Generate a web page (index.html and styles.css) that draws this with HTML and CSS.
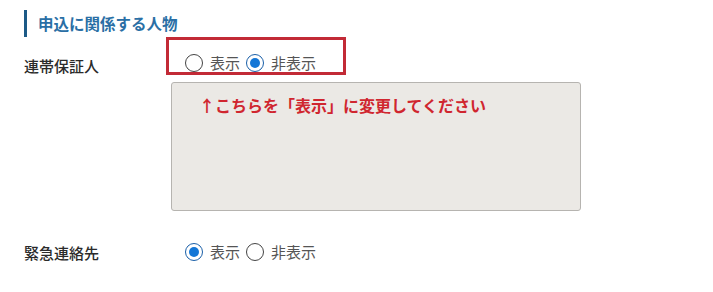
FILE: index.html
```html
<!DOCTYPE html>
<html lang="ja">
<head>
<meta charset="utf-8">
<link rel="stylesheet" href="styles.css">
</head>
<body>
<div class="page">
  <h2 class="section-title">申込に関係する人物</h2>
  <div class="row row-first">
    <div class="label">連帯保証人</div>
    <div class="highlight">
      <div class="options">
        <span class="option"><span class="radio"></span><span class="opt-text">表示</span></span>
        <span class="option"><span class="radio checked"></span><span class="opt-text">非表示</span></span>
      </div>
    </div>
  </div>
  <div class="note-box">
    <p class="note">↑こちらを「表示」に変更してください</p>
  </div>
  <div class="row row-second">
    <div class="label">緊急連絡先</div>
    <div class="options plain">
      <span class="option"><span class="radio checked"></span><span class="opt-text">表示</span></span>
      <span class="option"><span class="radio"></span><span class="opt-text">非表示</span></span>
    </div>
  </div>
</div>
</body>
</html>
```
FILE: styles.css
```css
* { box-sizing: border-box; }
html, body {
  margin: 0;
  padding: 0;
  background: #ffffff;
}
body {
  font-family: "Noto Sans CJK JP", "Noto Sans", sans-serif;
  color: #333;
}
.page {
  padding: 10px 0 0 24px;
  width: 713px;
  height: 292px;
}
.section-title {
  margin: 0;
  height: 27px;
  line-height: 26px;
  border-left: 3px solid #1d5a87;
  padding-left: 11px;
  font-size: 15.5px;
  font-weight: 700;
  color: #2a6fa5;
}
.row {
  display: flex;
  align-items: flex-start;
}
.label {
  width: 142px;
  font-size: 15px;
  font-weight: 500;
  line-height: 20px;
  color: #2b2b2b;
}
.row-first .label {
  margin-top: 19px;
}
.highlight {
  width: 180px;
  height: 38px;
  border: 3px solid #c22a36;
  padding: 14px 0 0 16px;
}
.options {
  display: flex;
  align-items: center;
  height: 18px;
}
.option {
  display: flex;
  align-items: center;
  margin-right: 6px;
}
.radio {
  width: 18px;
  height: 18px;
  border: 1px solid #444;
  border-radius: 50%;
  background: #fff;
  position: relative;
  flex: none;
}
.radio.checked {
  border-color: #1a5fa8;
}
.radio.checked::after {
  content: "";
  position: absolute;
  left: 3px;
  top: 3px;
  width: 10px;
  height: 10px;
  border-radius: 50%;
  background: #1376d6;
}
.opt-text {
  margin-left: 7px;
  font-size: 15px;
  line-height: 18px;
  color: #555;
}
.note-box {
  margin: 6px 0 0 147px;
  width: 410px;
  height: 129px;
  background: #ebe9e5;
  border: 1px solid #b6b4b0;
  border-radius: 3px;
  padding: 11px 0 0 27px;
}
.note {
  margin: 0;
  font-size: 16px;
  font-weight: 700;
  line-height: 22px;
  color: #d0262f;
}
.row-second {
  margin-top: 29px;
  align-items: center;
}
.row-second .label {
  margin-top: 3px;
}
.options.plain {
  margin-left: 19px;
}
```
